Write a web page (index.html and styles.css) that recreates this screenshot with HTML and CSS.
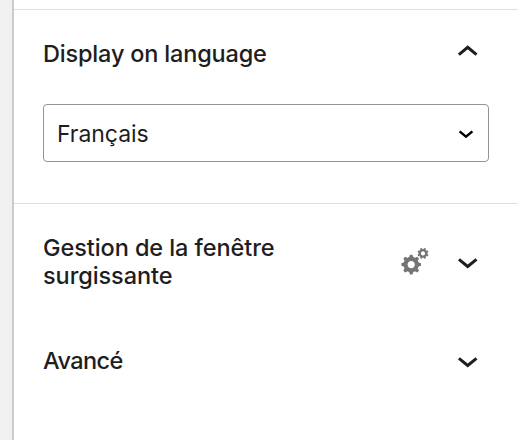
FILE: index.html
```html
<!DOCTYPE html>
<html lang="fr">
<head>
<meta charset="utf-8">
<title>Réglages du bloc</title>
<link rel="stylesheet" href="styles.css">
</head>
<body>
<aside class="sidebar">
  <section class="panel language">
    <header class="panel-header">
      <h2 class="title-language">Display on language</h2>
      <svg class="chevron" viewBox="0 0 20 12"><path d="m.9 9.7 8.8-7.4 8.8 7.4"/></svg>
    </header>
    <div class="select"><span>Français</span>
      <svg class="caret" viewBox="0 0 16 10"><path d="m1.6 2.4 6.4 5.2 6.4-5.2"/></svg>
    </div>
  </section>
  <section class="panel popup">
    <h2 class="title-popup">Gestion de la fenêtre surgissante</h2>
    <svg class="gears" viewBox="0 0 28 28">
      <defs>
        <g id="gear">
          <circle r="5.8" fill="none" stroke="#757575" stroke-width="4.2"/>
          <path fill="#757575" d="M-2.3-7-1.3-10h2.6l1 3zM-2.3 7-1.3 10h2.6l1-3zM-7-2.3-10-1.3v2.6l3 1zM7-2.3 10-1.3v2.6l-3 1z"/>
          <path transform="rotate(45)" fill="#757575" d="M-2.3-7-1.3-10h2.6l1 3zM-2.3 7-1.3 10h2.6l1-3zM-7-2.3-10-1.3v2.6l3 1zM7-2.3 10-1.3v2.6l-3 1z"/>
        </g>
      </defs>
      <use href="#gear" transform="translate(10.2 16.6) scale(.98)"/>
      <use href="#gear" transform="translate(22 5.4) rotate(22.5) scale(.56)"/>
    </svg>
    <svg class="chevron" viewBox="0 0 20 12"><path d="m.9 2.3 8.8 7.2 8.8-7.2"/></svg>
  </section>
  <section class="panel advanced">
    <h2 class="title-advanced">Avancé</h2>
    <svg class="chevron" viewBox="0 0 20 12"><path d="m.9 2.3 8.8 7.2 8.8-7.2"/></svg>
  </section>
</aside>
</body>
</html>
```
FILE: styles.css
```css
* { box-sizing: border-box; }
body { margin: 0; background: #f0f0f0; font-family: Inter, sans-serif; color: #1e1e1e; }
.sidebar { margin-left: 12px; height: 440px; padding-top: 9px; border-left: 2px solid #ccc; background: #fff; overflow: hidden; }
.panel { border-top: 1px solid #e0e0e0; padding: 0 29px; }
h2 { margin: 0; font-size: 23.5px; line-height: 28px; font-weight: 500; }
.title-language { letter-spacing: -0.18px; }
.title-popup { width: 260px; letter-spacing: -0.08px; }
.title-advanced { letter-spacing: -0.6px; }
.language { height: 194px; }
.panel-header { display: flex; align-items: center; justify-content: space-between; height: 88px; padding-right: 11px; }
.panel-header .chevron { margin-bottom: 6px; }
.select { display: flex; align-items: center; justify-content: space-between; height: 58px; margin-top: 6px; padding: 2px 14px 0 13px; border: 1px solid #949494; border-radius: 4px; font-size: 23px; letter-spacing: -0.05px; }
.popup, .advanced { display: flex; align-items: center; padding-right: 40px; }
.popup { height: 116px; }
.gears { width: 28px; height: 28px; margin-left: auto; margin-right: 29px; }
.advanced { height: 84px; border: 0; justify-content: space-between; }
.chevron { width: 20px; height: 12px; }
.popup .chevron, .advanced .chevron { margin-top: 2px; }
.caret { width: 16px; height: 10px; }
.chevron path, .caret path { fill: none; stroke: #1e1e1e; stroke-width: 3; }
.caret path { stroke: #000; stroke-width: 2.5; }
```
